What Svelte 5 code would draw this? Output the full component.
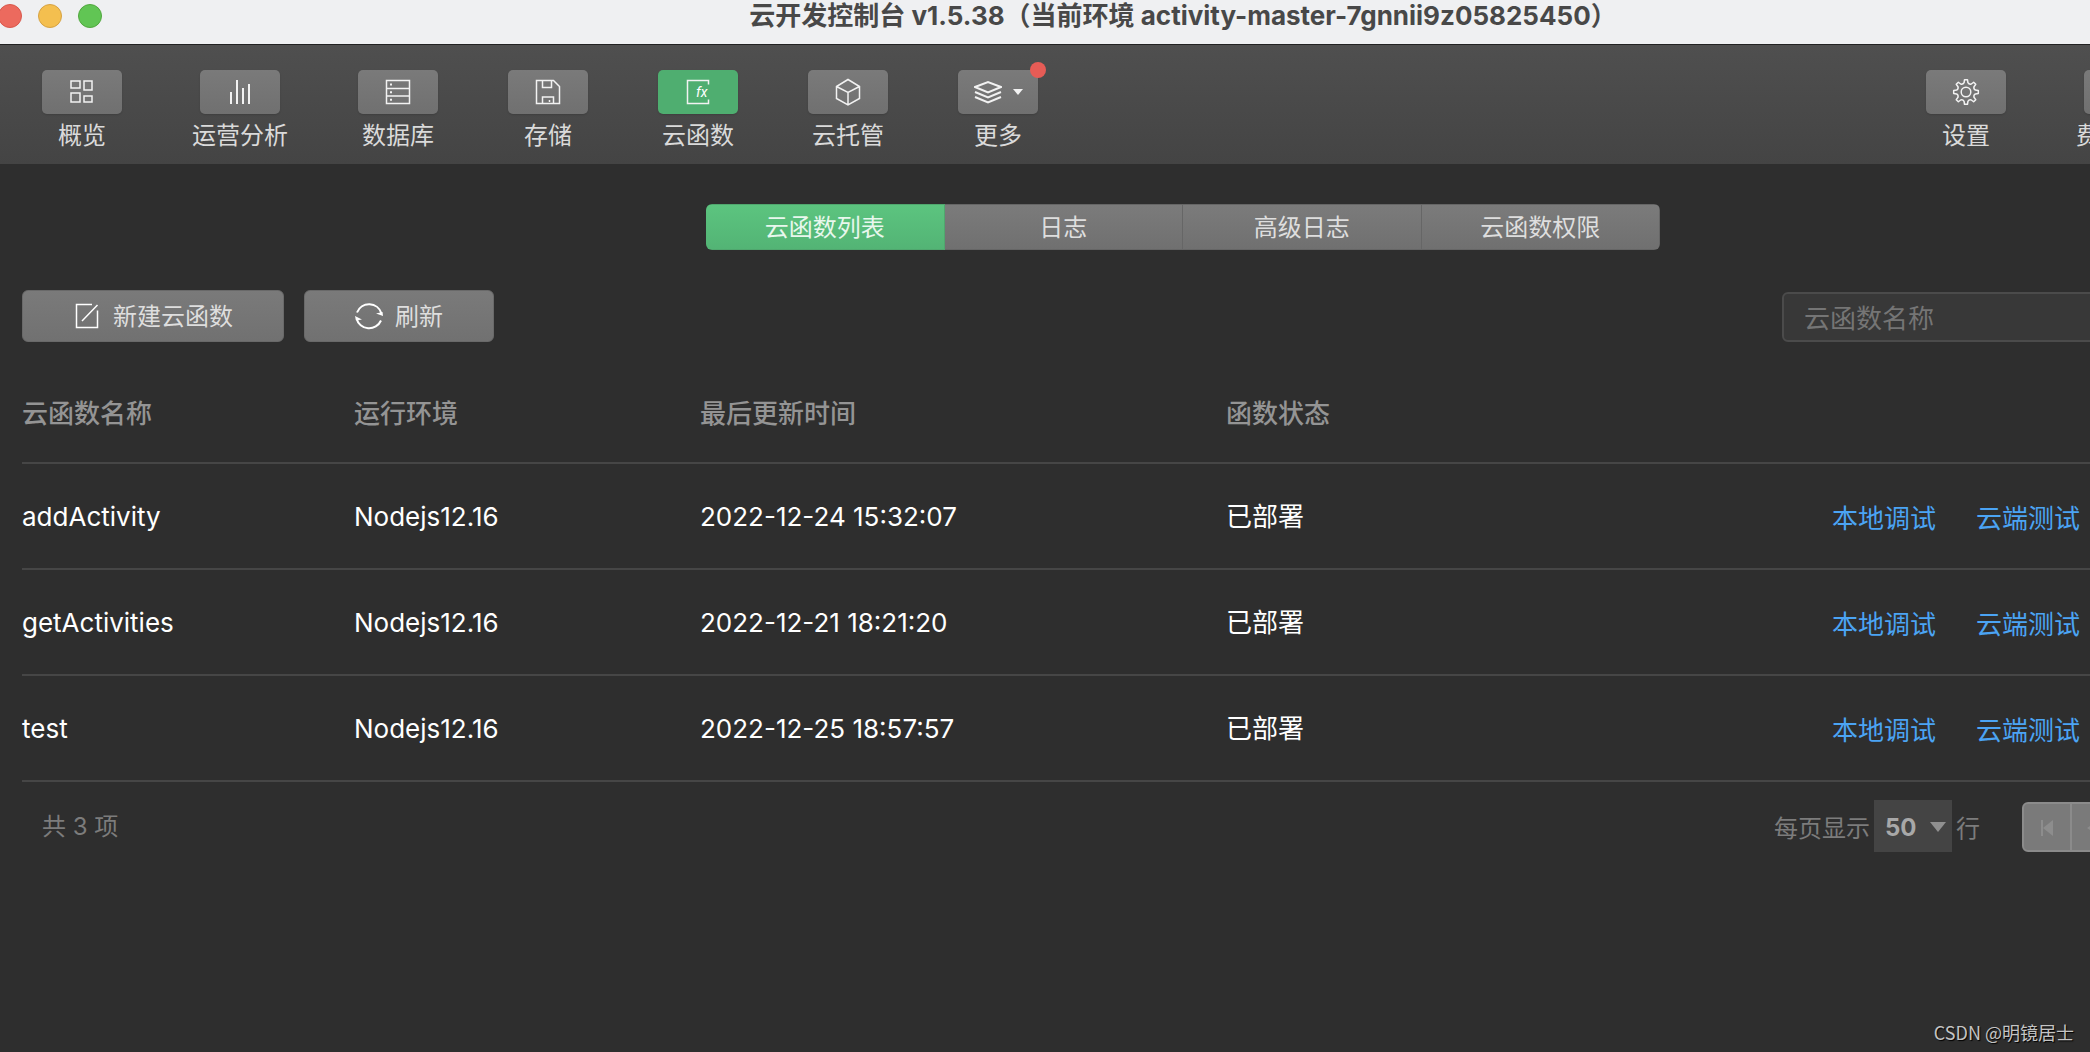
<script>
	const tools = [
		{ id: 'overview', label: '概览' },
		{ id: 'analysis', label: '运营分析' },
		{ id: 'database', label: '数据库' },
		{ id: 'storage', label: '存储' },
		{ id: 'functions', label: '云函数' },
		{ id: 'hosting', label: '云托管' },
		{ id: 'more', label: '更多', badge: true }
	];

	const tabs = ['云函数列表', '日志', '高级日志', '云函数权限'];

	const functions = [
		{ name: 'addActivity', runtime: 'Nodejs12.16', updated: '2022-12-24 15:32:07', status: '已部署' },
		{ name: 'getActivities', runtime: 'Nodejs12.16', updated: '2022-12-21 18:21:20', status: '已部署' },
		{ name: 'test', runtime: 'Nodejs12.16', updated: '2022-12-25 18:57:57', status: '已部署' }
	];

	let activeTool = $state('functions');
	let activeTab = $state('云函数列表');
	let keyword = $state('');
	let pageSize = $state('50');

	/** Outline of an eight-toothed gear around (14, 14). */
	function gearPath() {
		const at = (r, a) => `${(14 + r * Math.sin(a)).toFixed(2)} ${(14 - r * Math.cos(a)).toFixed(2)}`;
		let d = '';
		for (let i = 0; i < 8; i++) {
			const a = (i * Math.PI) / 4;
			d += `${i ? 'L' : 'M'}${at(9.6, a - 0.2)}L${at(12.4, a - 0.12)}L${at(12.4, a + 0.12)}L${at(9.6, a + 0.2)}`;
			d += `Q${at(8, a + Math.PI / 8)} ${at(9.6, a + Math.PI / 4 - 0.2)}`;
		}
		return d + 'Z';
	}
</script>

{#snippet icon(id)}
	<svg class="icon" viewBox="0 0 28 28" aria-hidden="true">
		{#if id === 'overview'}
			<path d="M3 3h9v7H3zM16 3h8v9h-8zM3 15h9v9H3zM16 18h8v6h-8z" />
		{:else if id === 'analysis'}
			<path stroke-width="2" d="M5 14v12M11 2v24M17 10v16M23 6v20" />
		{:else if id === 'database'}
			<path d="M2.5 2.5h23v23h-23zM2.5 10.5h23M2.5 18h23" />
			<path stroke-width="2" d="M6 6.5h2M6 14.2h2M6 21.8h2" />
		{:else if id === 'storage'}
			<path d="M2.5 2.5h17l6 6v17h-23zM8.5 2.5v7h9v-7M8.5 25.5v-6.5h11v6.5M15.5 22v2" />
		{:else if id === 'functions'}
			<path d="M24.5 6.500V2.500h-21v23h21v-4" />
			<text x="12" y="18.5">fx</text>
		{:else if id === 'hosting'}
			<path d="M14 1.500l11.500 7v12L14 27 2.500 20.500v-12zM2.500 8.500L14 14.500l11.500-6M14 14.500V27" />
		{:else if id === 'more'}
			<path stroke-width="2" d="M1 9l13-5 13 5-13 5.500zM1 14l13 5.500L27 14M1 19l13 5.500L27 19" />
		{:else if id === 'settings'}
			<path stroke-linejoin="round" d={gearPath()} />
			<circle cx="14" cy="14" r="4.800" />
		{:else if id === 'create'}
			<path d="M19 2.500H3.500v23h21V8.500M9 19L24.500 3" />
		{:else if id === 'refresh'}
			<path stroke-width="2" d="M2 10.500a13 13 0 0 1 24.500 1M1.500 16.500a13 13 0 0 0 24.500 2" />
			<path class="solid" d="M28 14l-7-2.500 6.500-1.500zM0 14l7 3.500-6 1z" />
		{/if}
	</svg>
{/snippet}

<div class="screen">
	<div class="window">
		<header class="titlebar">
			<div class="lights"><i class="close"></i><i class="minimize"></i><i class="zoom"></i></div>
			<h1>云开发控制台 v1.5.38（当前环境 activity-master-7gnnii9z05825450）</h1>
		</header>

		<nav class="toolbar">
			{#each tools as tool}
				<button class="tool" class:active={activeTool === tool.id} onclick={() => (activeTool = tool.id)}>
					<span class="tile">
						{@render icon(tool.id)}
						{#if tool.badge}
							<span class="caret"></span>
							<span class="badge"></span>
						{/if}
					</span>
					<span>{tool.label}</span>
				</button>
			{/each}
			<button class="tool settings">
				<span class="tile">{@render icon('settings')}</span>
				<span>设置</span>
			</button>
			<button class="tool">
				<span class="tile"></span>
				<span>费用管理</span>
			</button>
		</nav>

		<main>
			<div class="tabs">
				{#each tabs as tab}
					<button class:active={activeTab === tab} onclick={() => (activeTab = tab)}>{tab}</button>
				{/each}
			</div>

			<div class="actions">
				<button class="action">{@render icon('create')}<span>新建云函数</span></button>
				<button class="action">{@render icon('refresh')}<span>刷新</span></button>
				<input type="text" placeholder="云函数名称" aria-label="云函数名称" bind:value={keyword} />
			</div>

			<table>
				<colgroup>
					<col class="name" />
					<col class="runtime" />
					<col class="updated" />
					<col class="status" />
					<col />
				</colgroup>
				<thead>
					<tr>
						<th>云函数名称</th>
						<th>运行环境</th>
						<th>最后更新时间</th>
						<th>函数状态</th>
						<td></td>
					</tr>
				</thead>
				<tbody>
					{#each functions as fn}
						<tr>
							<td>{fn.name}</td>
							<td>{fn.runtime}</td>
							<td>{fn.updated}</td>
							<td>{fn.status}</td>
							<td>
								<div class="links">
									<a href="#local">本地调试</a>
									<a href="#cloud">云端测试</a>
								</div>
							</td>
						</tr>
					{/each}
				</tbody>
			</table>

			<footer>
				<span class="total">共 3 项</span>
				<div class="paging">
					<label for="page-size">每页显示</label>
					<span class="select">
						<select id="page-size" bind:value={pageSize}>
							<option>10</option>
							<option>20</option>
							<option>50</option>
						</select>
					</span>
					<span>行</span>
					<div class="pager">
						<button aria-label="第一页" disabled>
							<svg viewBox="0 0 16 16"><path d="M2 0h2v16H2zM14 0v16L4 8z" /></svg>
						</button>
						<button aria-label="上一页" disabled>
							<svg viewBox="0 0 16 16"><path d="M12 0v16L0 8z" /></svg>
						</button>
					</div>
				</div>
			</footer>
		</main>
	</div>
	<span class="watermark">CSDN @明镜居士</span>
</div>

<style>
	:global(body) {
		background: #2e2e2e;
	}

	.screen {
		position: relative;
		min-height: 100vh;
		box-sizing: border-box;
		overflow: hidden;
		background: #2e2e2e;
		color: #fff;
		font-family: Inter, 'Noto Sans CJK SC', sans-serif;
		font-size: 26px;
	}

	/* the window runs past the right edge of the screen */
	.window {
		width: calc(100% + 276px);
	}

	button,
	input,
	select {
		font: inherit;
		color: inherit;
		margin: 0;
		padding: 0;
		border: none;
		background: none;
		box-sizing: border-box;
	}

	.icon {
		width: 28px;
		height: 28px;
		fill: none;
		stroke: #f2f2f2;
		stroke-width: 1.5;
		flex: none;
	}

	.icon text {
		fill: #fff;
		stroke: none;
		font: italic 14px Roboto, sans-serif;
	}

	.icon .solid {
		fill: #fff;
		stroke: none;
	}

	.titlebar {
		display: grid;
		height: 44px;
		background: #eff0f2;
		border-bottom: 1px solid #222;
	}

	.titlebar > * {
		grid-area: 1 / 1;
	}

	.lights {
		display: flex;
		gap: 16px;
		margin: 4px 0 0 -2px;
	}

	.lights i {
		width: 24px;
		height: 24px;
		border-radius: 50%;
		box-sizing: border-box;
		border: 1px solid #d9584c;
	}

	.close {
		background: #ec6a5e;
	}

	.lights .minimize {
		background: #f4bf4f;
		border-color: #d6a243;
	}

	.lights .zoom {
		background: #61c554;
		border-color: #51a73e;
	}

	h1 {
		margin: 0;
		text-align: center;
		color: #484848;
		font-size: 26px;
		line-height: 32px;
		font-weight: 700;
	}

	.toolbar {
		display: flex;
		gap: 70px;
		height: 119px;
		padding: 25px 194px 0 42px;
		box-sizing: border-box;
		background: linear-gradient(#4f4f4f, #444);
	}

	.tool {
		display: flex;
		flex-direction: column;
		align-items: center;
		align-self: flex-start;
		gap: 4px;
		min-width: 80px;
		color: #dadada;
		font-size: 24px;
		line-height: 36px;
		white-space: nowrap;
	}

	.settings {
		margin-left: auto;
	}

	.tile {
		position: relative;
		display: flex;
		align-items: center;
		justify-content: center;
		gap: 11px;
		width: 80px;
		height: 44px;
		border-radius: 5px;
		background: linear-gradient(#7a7a7a, #707070);
		box-shadow: 0 1px 2px rgba(0, 0, 0, 0.15);
	}

	.active .tile {
		background: #4fae70;
	}

	.caret {
		border: 5px solid transparent;
		border-top: 6px solid #f2f2f2;
		border-bottom: none;
	}

	.badge {
		position: absolute;
		top: -8px;
		right: -8px;
		width: 16px;
		height: 16px;
		border-radius: 50%;
		background: #e65c56;
	}

	main {
		padding: 40px 22px 0;
	}

	.tabs {
		display: grid;
		grid-template-columns: repeat(4, 1fr);
		width: 954px;
		height: 46px;
		margin: 0 auto;
		border-radius: 6px;
		overflow: hidden;
		color: #dedede;
		font-size: 24px;
	}

	.tabs button {
		padding-bottom: 3px;
		background: linear-gradient(#7b7b7b, #707070);
		border: 1px solid #666;
		border-left-width: 0;
	}

	.tabs .active {
		background: linear-gradient(#5cc47f, #53b475);
		border-color: #50a76e;
		color: #e8f7ed;
	}

	.actions {
		display: flex;
		gap: 20px;
		margin-top: 40px;
		height: 52px;
	}

	.action {
		display: flex;
		align-items: center;
		gap: 12px;
		padding: 0 50px;
		border: 1px solid #696969;
		border-radius: 6px;
		background: linear-gradient(#7a7a7a, #717171);
		color: #dedede;
		font-size: 24px;
	}

	.action span {
		padding-bottom: 4px;
	}

	.action .icon {
		stroke: #fff;
	}

	input {
		width: 562px;
		height: 50px;
		margin: 2px 0 0 auto;
		padding: 2px 20px 0;
		border: 2px solid #4b4b4b;
		border-radius: 6px;
		background: #383838;
	}

	input::placeholder {
		color: #757575;
	}

	table {
		width: 100%;
		margin-top: 22px;
		table-layout: fixed;
		border-collapse: separate;
		border-spacing: 0;
		line-height: 36px;
	}

	.name {
		width: 332px;
	}

	.runtime {
		width: 346px;
	}

	.updated {
		width: 526px;
	}

	.status {
		width: 606px;
	}

	th,
	td {
		height: 102px;
		padding: 2px 0 0;
		text-align: left;
		border-bottom: 2px solid #464646;
	}

	thead th,
	thead td {
		height: 96px;
		color: #949494;
		font-weight: 500;
	}

	.links {
		display: flex;
		gap: 40px;
		padding-top: 4px;
	}

	a {
		color: #4ba4f4;
		text-decoration: none;
	}

	footer {
		display: flex;
		justify-content: space-between;
		align-items: center;
		padding: 18px 0 0 20px;
		color: #7c7c7c;
		font-size: 24px;
	}

	.total {
		padding-bottom: 4px;
	}

	.paging {
		display: flex;
		align-items: center;
		gap: 4px;
	}

	.select {
		position: relative;
	}

	.select::after {
		content: '';
		position: absolute;
		top: 22px;
		right: 6px;
		border: 8px solid transparent;
		border-top: 10px solid #909090;
		border-bottom: none;
		pointer-events: none;
	}

	select {
		display: block;
		width: 78px;
		height: 52px;
		padding: 2px 0 0 11px;
		appearance: none;
		border-radius: 0;
		background: #444;
		color: #a8a8a8;
		font-weight: 700;
	}

	.pager {
		display: flex;
		align-self: flex-end;
		width: 322px;
		height: 50px;
		margin-left: 38px;
		box-sizing: border-box;
		border: 2px solid #8b8b8b;
		border-radius: 6px;
		background: #7a7a7a;
	}

	.pager button {
		width: 48px;
		border-right: 2px solid #8b8b8b;
	}

	.pager svg {
		width: 16px;
		height: 16px;
		fill: #8d8d8d;
	}

	.watermark {
		position: absolute;
		right: 16px;
		bottom: 7px;
		color: #c4c4c4;
		font-family: 'Noto Sans CJK SC', sans-serif;
		font-size: 18px;
		line-height: 26px;
		text-shadow: 1px 1px 1px #000;
	}
</style>
